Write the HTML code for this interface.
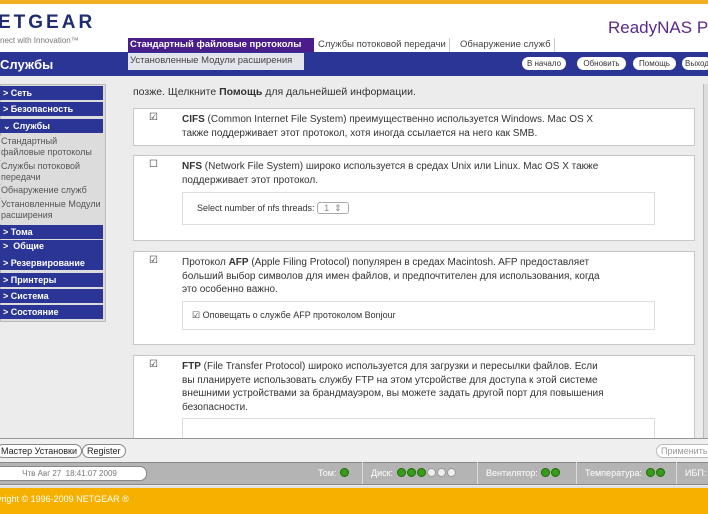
<!DOCTYPE html>
<html><head><meta charset="utf-8"><style>
*{margin:0;padding:0;box-sizing:border-box}
body{width:708px;height:514px;overflow:hidden;background:#ececec;font-family:"Liberation Sans",sans-serif;position:relative}
.a{position:absolute;white-space:nowrap}
.nav{position:absolute;left:0;width:103px;height:14px;background:#2b3595;color:#fff;font:bold 9px "Liberation Sans",sans-serif;line-height:14px;padding-left:3px;white-space:nowrap;overflow:hidden}
.sub{position:absolute;left:0;width:103px;background:#dcdcdc;color:#555;font:9px "Liberation Sans",sans-serif;line-height:11px;padding-left:1px}
.pnl{position:absolute;left:133px;width:562px;background:#fff;border:1px solid #c8c8c8;font-size:10px;color:#333;line-height:13.5px}
.pnl .t{position:absolute;left:48px;top:4px;white-space:nowrap}
.cb{position:absolute;left:15px;top:2px;font-size:10px;color:#333}
.in{position:absolute;left:48px;width:473px;border:1px solid #ddd;background:#fff}
.btn{position:absolute;top:57px;height:13px;background:#fff;border-radius:7px;font-size:8px;line-height:13px;text-align:center;color:#333}
.bb{position:absolute;top:444px;height:14px;border:1px solid #888;border-radius:7px;background:#fff;font:9px "Liberation Sans",sans-serif;line-height:12px;padding:0 4px;color:#222;white-space:nowrap}
.dot{display:inline-block;width:9px;height:9px;border-radius:50%;background:#3a9a1a;border:1px solid #1c6a0a;margin-left:1px;vertical-align:-1px}
.dot.o{background:#eee;border-color:#999}
.st{position:absolute;top:462px;height:22px;line-height:22px;font-size:9px;color:#fff;border-left:1px solid #ddd;padding-left:8px;white-space:nowrap}
</style></head><body>
<div class="a" style="left:0;top:0;width:708px;height:4px;background:#f0b020"></div>
<div class="a" style="left:0;top:4px;width:708px;height:48px;background:#fff"></div>
<div class="a" style="left:-2px;top:12px;font:bold 19px 'Liberation Sans',sans-serif;letter-spacing:3px;color:#1d2d70">ETGEAR</div>
<div class="a" style="left:0;top:36px;font:8px 'Liberation Sans',sans-serif;color:#777">nect with Innovation™</div>
<div class="a" style="left:608px;top:18px;font:17px 'Liberation Sans',sans-serif;color:#5a2a86">ReadyNAS Pro</div>
<div class="a" style="left:128px;top:38px;width:186px;height:14px;background:#4a1d8a;color:#fff;font:bold 9.5px 'Liberation Sans',sans-serif;line-height:14px;padding-left:2px">Стандартный файловые протоколы</div>
<div class="a" style="left:318px;top:38px;height:14px;font:9.5px 'Liberation Sans',sans-serif;line-height:14px;color:#444;border-right:1px solid #ccc;padding-right:3px">Службы потоковой передачи</div>
<div class="a" style="left:460px;top:38px;height:14px;font:9.5px 'Liberation Sans',sans-serif;line-height:14px;color:#444;border-right:1px solid #ccc;padding-right:3px">Обнаружение служб</div>
<div class="a" style="left:0;top:52px;width:708px;height:24px;background:#2b3595"></div>
<div class="a" style="left:0;top:57px;font:bold 13px 'Liberation Sans',sans-serif;color:#fff">Службы</div>
<div class="a" style="left:128px;top:53px;width:176px;height:17px;background:#e4e4ec;font:9.5px 'Liberation Sans',sans-serif;line-height:16px;padding-left:2px;color:#444">Установленные Модули расширения</div>
<div class="btn" style="left:522px;width:44px">В начало</div>
<div class="btn" style="left:577px;width:49px">Обновить</div>
<div class="btn" style="left:633px;width:43px">Помощь</div>
<div class="btn" style="left:682px;width:30px">Выход</div>
<div class="a" style="left:0;top:84px;width:106px;height:238px;background:#dcdcdc;border:1px solid #bbb"></div>
<div class="nav" style="top:86px">&gt; Сеть</div>
<div class="nav" style="top:102px">&gt; Безопасность</div>
<div class="nav" style="top:119px">⌄ Службы</div>
<div class="sub" style="top:136px;height:24px">Стандартный файловые протоколы</div>
<div class="sub" style="top:161px;height:23px">Службы потоковой передачи</div>
<div class="sub" style="top:185px;height:13px">Обнаружение служб</div>
<div class="sub" style="top:199px;height:25px">Установленные Модули расширения</div>
<div class="nav" style="top:225px">&gt; Тома</div>
<div class="nav" style="top:240px;height:16px;line-height:12px">&gt; &nbsp;Общие</div>
<div class="nav" style="top:256px">&gt; Резервирование</div>
<div class="nav" style="top:273px">&gt; Принтеры</div>
<div class="nav" style="top:289px">&gt; Система</div>
<div class="nav" style="top:305px">&gt; Состояние</div>
<div class="a" style="left:133px;top:86px;font-size:10.5px;color:#333">позже. Щелкните <b>Помощь</b> для дальнейшей информации.</div>
<div class="pnl" style="top:108px;height:38px"><span class="cb">☑</span><div class="t"><b>CIFS</b> (Common Internet File System) преимущественно используется Windows. Mac OS X<br>также поддерживает этот протокол, хотя иногда ссылается на него как SMB.</div></div>
<div class="pnl" style="top:155px;height:86px"><span class="cb">☐</span><div class="t"><b>NFS</b> (Network File System) широко используется в средах Unix или Linux. Mac OS X также<br>поддерживает этот протокол.</div><div class="in" style="top:36px;height:33px;font:9px 'Liberation Sans',sans-serif;padding:10px 0 0 14px">Select number of nfs threads: <span style="border:1px solid #aaa;border-radius:3px;padding:0 6px;color:#888">1 &nbsp;⇕</span></div></div>
<div class="pnl" style="top:251px;height:94px"><span class="cb">☑</span><div class="t">Протокол <b>AFP</b> (Apple Filing Protocol) популярен в средах Macintosh. AFP предоставляет<br>больший выбор символов для имен файлов, и предпочтителен для использования, когда<br>это особенно важно.</div><div class="in" style="top:49px;height:29px;font:9px 'Liberation Sans',sans-serif;padding:8px 0 0 9px">☑ Оповещать о службе AFP протоколом Bonjour</div></div>
<div class="pnl" style="top:355px;height:84px"><span class="cb">☑</span><div class="t"><b>FTP</b> (File Transfer Protocol) широко используется для загрузки и пересылки файлов. Если<br>вы планируете использовать службу FTP на этом утсройстве для доступа к этой системе<br>внешними устройствами за брандмауэром, вы можете задать другой порт для повышения<br>безопасности.</div><div class="in" style="top:62px;height:30px"></div></div>
<div class="a" style="left:703px;top:84px;width:5px;height:354px;background:#ddd;border-left:1px solid #bbb"></div>
<div class="a" style="left:0;top:438px;width:708px;height:24px;background:#efefef;border-top:1px solid #999"></div>
<div class="bb" style="left:-4px">Мастер Установки</div>
<div class="bb" style="left:82px">Register</div>
<div class="bb" style="left:656px;color:#999;border-color:#bbb;width:60px">Применить</div>
<div class="a" style="left:0;top:462px;width:708px;height:23px;background:#b4b4b4;border-top:1px solid #888;border-bottom:1px solid #888"></div>
<div class="a" style="left:-8px;top:466px;width:155px;height:15px;background:#fff;border:1px solid #888;border-radius:7px;font-size:8px;line-height:13px;text-align:center;color:#777">Чтв Авг 27 &nbsp;18:41:07 2009</div>
<div class="st" style="left:310px;border:none">Том: <span class="dot"></span></div>
<div class="st" style="left:362px">Диск: <span class="dot"></span><span class="dot"></span><span class="dot"></span><span class="dot o"></span><span class="dot o"></span><span class="dot o"></span></div>
<div class="st" style="left:477px">Вентилятор: <span class="dot"></span><span class="dot"></span></div>
<div class="st" style="left:576px">Температура: <span class="dot"></span><span class="dot"></span></div>
<div class="st" style="left:676px">ИБП:</div>
<div class="a" style="left:0;top:486px;width:708px;height:28px;background:#f5b000;border-top:2px solid #e0e0e0"></div>
<div class="a" style="left:-3px;top:494px;font-size:9px;color:#fff">yright © 1996-2009 NETGEAR ®</div>
</body></html>
